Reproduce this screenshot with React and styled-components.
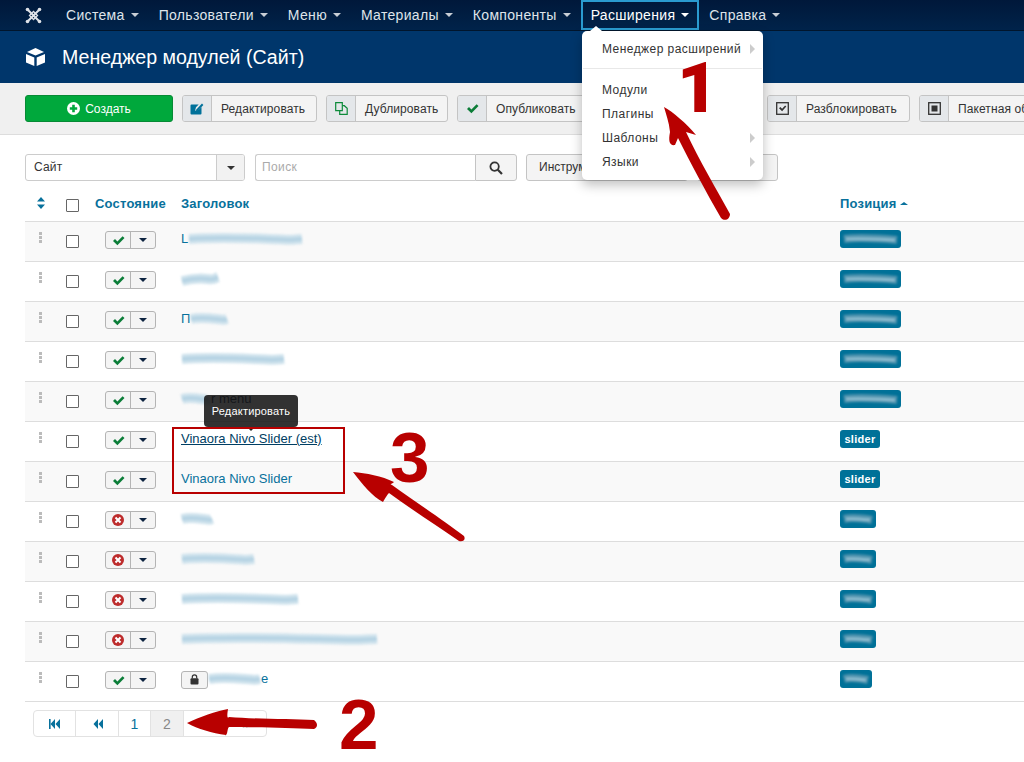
import React from "react";
import styled, { createGlobalStyle } from "styled-components";

const GlobalStyle = createGlobalStyle`
  html, body {
    margin: 0;
    padding: 0;
    height: 762px;
    overflow: hidden;
    background: #fff;
  }
  body {
    font-family: "Liberation Sans", Arial, sans-serif;
    font-size: 13px;
    color: #333;
  }
  * {
    box-sizing: border-box;
  }
`;

const RED = "#b80000";
const BLUE = "#08719c";

const Page = styled.div`
  position: relative;
  width: 1024px;
  height: 762px;
  overflow: hidden;
`;

const NavBar = styled.nav`
  display: flex;
  align-items: stretch;
  height: 31px;
  padding-left: 25px;
  background: linear-gradient(#00183a, #00234a);
  border-bottom: 1px solid #00152c;
`;

const Brand = styled.div`
  width: 31px;
  display: flex;
  align-items: center;
  svg {
    display: block;
  }
`;

const NavItem = styled.div`
  position: relative;
  display: flex;
  align-items: center;
  gap: 6px;
  height: 30px;
  padding: 0 10px;
  font-size: 14px;
  letter-spacing: 0.32px;
  outline: ${(p) => (p.$open ? "2px solid #2a9bd0" : "none")};
  outline-offset: -2px;
  color: ${(p) => (p.$open ? "#fff" : "#dfe4ea")};
`;

const Caret = styled.span`
  display: inline-block;
  width: 0;
  height: 0;
  border-left: 4px solid transparent;
  border-right: 4px solid transparent;
  border-top: ${(p) => (p.$up ? "0" : `4px solid ${p.$color || "#c8ced6"}`)};
  border-bottom: ${(p) => (p.$up ? `3px solid ${p.$color}` : "0")};
  vertical-align: ${(p) => (p.$up ? "3px" : "middle")};
`;

const SubHead = styled.header`
  display: flex;
  align-items: center;
  gap: 16px;
  height: 52px;
  padding-left: 25px;
  background: #00366b;
  color: #fff;
  h1 {
    margin: 0;
    font-size: 19.6px;
    font-weight: 400;
    line-height: 52px;
  }
`;

const ToolBar = styled.div`
  display: flex;
  align-items: center;
  gap: 9px;
  height: 52px;
  padding: 0 0 0 25px;
  background: #f0f0f0;
  border-bottom: 1px solid #ddd;
  white-space: nowrap;
`;

const CreateButton = styled.div`
  display: flex;
  align-items: center;
  justify-content: center;
  gap: 5px;
  flex: none;
  width: 148px;
  height: 27px;
  background: #00a83c;
  border: 1px solid #078a35;
  border-radius: 3px;
  color: #fff;
  font-size: 12px;
`;

const ToolButton = styled.div`
  display: flex;
  align-items: stretch;
  flex: none;
  width: ${(p) => p.$width}px;
  height: 27px;
  background: #f4f4f4;
  border: 1px solid #c4c4c4;
  border-radius: 3px;
  font-size: 12px;
  color: #333;
  overflow: hidden;
`;

const ToolIcon = styled.span`
  display: flex;
  align-items: center;
  justify-content: center;
  flex: none;
  width: 29px;
  background: #e4e7ea;
  border-right: 1px solid #c4c4c4;
`;

const ToolLabel = styled.span`
  display: flex;
  align-items: center;
  padding-left: 9px;
  letter-spacing: 0.1px;
`;

const Filters = styled.div`
  display: flex;
  align-items: center;
  height: 27px;
  margin: 19px 0 0 25px;
  white-space: nowrap;
`;

const SelectBox = styled.div`
  display: flex;
  width: 220px;
  height: 27px;
  border: 1px solid #ccc;
  border-radius: 3px;
  font-size: 12px;
  overflow: hidden;
`;

const SelectValue = styled.span`
  flex: 1;
  padding-left: 8px;
  line-height: 25px;
  letter-spacing: 0.2px;
`;

const SelectArrow = styled.span`
  display: flex;
  align-items: center;
  justify-content: center;
  width: 28px;
  background: #f2f2f2;
  border-left: 1px solid #ccc;
`;

const SearchInput = styled.div`
  width: 220px;
  height: 27px;
  margin-left: 10px;
  padding-left: 6px;
  border: 1px solid #ccc;
  border-right: 0;
  border-radius: 3px 0 0 3px;
  color: #aaa;
  font-size: 12px;
  letter-spacing: 0.4px;
  line-height: 25px;
`;

const SearchButton = styled.div`
  display: flex;
  align-items: center;
  justify-content: center;
  width: 42px;
  height: 27px;
  background: #f4f4f4;
  border: 1px solid #c4c4c4;
  border-radius: 0 3px 3px 0;
`;

const FilterButton = styled.div`
  width: ${(p) => p.$width}px;
  height: 27px;
  margin-left: 9px;
  padding-left: 12px;
  background: #f4f4f4;
  border: 1px solid #c4c4c4;
  border-radius: 3px;
  font-size: 12px;
  line-height: 25px;
`;

const Table = styled.div`
  margin: 9px 0 0 25px;
`;

const columns = "41px 29px 86px 659px 1fr";

const HeadRow = styled.div`
  display: grid;
  grid-template-columns: ${columns};
  align-items: center;
  height: 32px;
  padding-bottom: 5px;
  border-bottom: 1px solid #ddd;
  color: ${BLUE};
  font-size: 13px;
  font-weight: 700;
  letter-spacing: 0.2px;
`;

const Row = styled.div`
  display: grid;
  grid-template-columns: ${columns};
  align-items: start;
  height: 40px;
  padding-top: 9px;
  background: ${(p) => (p.$odd ? "#f9f9f9" : "#fff")};
  border-bottom: 1px solid #ddd;
`;

const SortCell = styled.div`
  display: flex;
  justify-content: center;
  padding-right: 10px;
`;

const Handle = styled.span`
  display: grid;
  grid-template-columns: 3px;
  grid-auto-rows: 3px;
  gap: 1px;
  margin-top: 1px;
  i {
    display: block;
    background: #bbb;
  }
`;

const Check = styled.span`
  display: block;
  width: 13px;
  height: 13px;
  margin-top: ${(p) => (p.$head ? "5px" : "4px")};
  background: #fff;
  border: 1px solid #666;
  border-radius: 1px;
`;

const StatusCell = styled.div`
  padding-left: 10px;
`;

const Toggle = styled.div`
  display: flex;
  width: 51px;
  height: 18px;
  background: #f4f4f4;
  border: 1px solid #b4b4b4;
  border-radius: 3px;
`;

const ToggleIcon = styled.span`
  display: flex;
  align-items: center;
  justify-content: center;
  width: 25px;
  border-right: 1px solid #b4b4b4;
`;

const ToggleCaret = styled.span`
  display: flex;
  align-items: center;
  justify-content: center;
  flex: 1;
`;

const TitleCell = styled.div`
  display: flex;
  align-items: center;
  height: 15px;
  font-size: 13px;
  color: ${BLUE};
  white-space: nowrap;
`;

const TitleLink = styled.span`
  color: ${(p) => (p.$hover ? "#003e63" : BLUE)};
  text-decoration: ${(p) => (p.$hover ? "underline" : "none")};
`;

const DarkText = styled.span`
  color: #0c2340;
  margin-left: 1px;
`;

const LockButton = styled.span`
  display: flex;
  flex: none;
  align-items: center;
  justify-content: center;
  width: 27px;
  height: 18px;
  margin-top: 2px;
  background: #f4f4f4;
  border: 1px solid #b4b4b4;
  border-radius: 3px;
`;

const Smudge = styled.svg`
  display: block;
  flex: none;
  overflow: visible;
  filter: blur(${(p) => p.$blur}px);
`;

const Badge = styled.span`
  display: inline-flex;
  align-items: center;
  justify-content: center;
  height: 18px;
  min-width: ${(p) => p.$width}px;
  margin-top: -1px;
  padding: 0 4px;
  background: #007198;
  border-radius: 3px;
  color: #fff;
  font-size: 11px;
  font-weight: 700;
  letter-spacing: 0.3px;
`;

const Pagination = styled.div`
  display: flex;
  width: 234px;
  height: 27px;
  margin: 8px 0 0 33px;
  border: 1px solid #e2e2e2;
  border-radius: 4px;
  background: #fff;
`;

const PageCell = styled.span`
  display: flex;
  align-items: center;
  justify-content: center;
  width: ${(p) => p.$width}px;
  border-right: ${(p) => (p.$last ? "0" : "1px solid #e2e2e2")};
  background: ${(p) => (p.$active ? "#f0f0f0" : "transparent")};
  color: ${(p) => (p.$active ? "#888" : p.$muted ? "#ccc" : BLUE)};
  font-size: 14px;
`;

const Dropdown = styled.div`
  position: absolute;
  left: 582px;
  top: 31px;
  width: 181px;
  height: 149px;
  padding-top: 6px;
  background: #fff;
  border-radius: 5px;
  box-shadow: 0 5px 12px rgba(0, 0, 0, 0.25);
  font-size: 12px;
  color: #333;
  &::before {
    content: "";
    position: absolute;
    left: 8px;
    top: -5px;
    border-left: 6px solid transparent;
    border-right: 6px solid transparent;
    border-bottom: 5px solid #fff;
  }
`;

const MenuItem = styled.div`
  display: flex;
  align-items: center;
  justify-content: space-between;
  height: 24px;
  padding: 0 10px 0 20px;
  letter-spacing: 0.45px;
`;

const MenuArrow = styled.span`
  width: 0;
  height: 0;
  border-top: 5px solid transparent;
  border-bottom: 5px solid transparent;
  border-left: 5px solid #ccc;
  margin-right: -2px;
`;

const MenuDivider = styled.div`
  height: 1px;
  margin: 7px 1px 9px;
  background: #e8e8e8;
`;

const Tooltip = styled.div`
  position: absolute;
  left: 204px;
  top: 395px;
  width: 94px;
  height: 32px;
  padding-top: 10px;
  background: rgba(22, 22, 22, 0.88);
  border-radius: 4px;
  color: #fff;
  font-size: 11px;
  letter-spacing: 0.2px;
  text-align: center;
  &::after {
    content: "";
    position: absolute;
    left: 43px;
    bottom: -4px;
    border-left: 4px solid transparent;
    border-right: 4px solid transparent;
    border-top: 4px solid #222;
  }
`;

const Scrawl = styled.svg`
  position: absolute;
  left: 0;
  top: 0;
  pointer-events: none;
`;

const Numeral = styled.span`
  position: absolute;
  left: ${(p) => p.$x}px;
  top: ${(p) => p.$y}px;
  color: ${RED};
  font-family: ${(p) => (p.$plain ? `Roboto, sans-serif` : "inherit")};
  font-size: 71px;
  font-weight: ${(p) => (p.$plain ? 900 : 700)};
  line-height: 71px;
`;

const MarkBox = styled.div`
  position: absolute;
  left: 172px;
  top: 427px;
  width: 173px;
  height: 67px;
  border: 2px solid ${RED};
`;

const JoomlaLogo = () => (
  <svg width="17" height="17" viewBox="0 0 17 17" fill="none" stroke="#dfe3e8" strokeLinecap="round">
    <path d="M3 3l11 11M14 3L3 14" strokeWidth="2" />
    <path d="M4.5 8.5L8.5 4.5 12.5 8.5 8.5 12.5z" strokeWidth="1.3" />
    <circle cx="2.5" cy="2.5" r="1.8" fill="#dfe3e8" stroke="none" />
    <circle cx="14.5" cy="2.5" r="1.8" fill="#dfe3e8" stroke="none" />
    <circle cx="2.5" cy="14.5" r="1.8" fill="#dfe3e8" stroke="none" />
    <circle cx="14.5" cy="14.5" r="1.8" fill="#dfe3e8" stroke="none" />
  </svg>
);

const CubeIcon = () => (
  <svg width="21" height="20" viewBox="0 0 21 20" fill="#fff">
    <path d="M10.5 1L19 5l-8.5 3.6L2 5z" />
    <path d="M1 7l8.3 3.4V19L1 15.4z" />
    <path d="M20 7l-8.3 3.4V19l8.3-3.6z" />
  </svg>
);

const PlusCircle = () => (
  <svg width="13" height="13" viewBox="0 0 13 13">
    <circle cx="6.5" cy="6.5" r="6.5" fill="#fff" />
    <path d="M5.2 2.8h2.6v2.4h2.4v2.6H7.8v2.4H5.2V7.8H2.8V5.2h2.4z" fill="#00a83c" />
  </svg>
);

const EditIcon = () => (
  <svg width="14" height="14" viewBox="0 0 14 14" fill="#00719a">
    <path d="M1.5 2.5h7.2L6 5.2 5 8.8 8.6 7.8 11.5 5v6.5a1 1 0 0 1-1 1h-9a1 1 0 0 1-1-1v-8a1 1 0 0 1 1-1z" />
    <path d="M6.6 7.2l5.4-5.6 1.4 1.4-5.4 5.6-2 .6z" />
  </svg>
);

const CopyIcon = () => (
  <svg width="13" height="13" viewBox="0 0 13 13" fill="none" stroke="#0c8a3a" strokeWidth="1.2">
    <path d="M.7.7h6.6v8H.7z" />
    <path d="M7.3 3.7h2l2.9 2.6v6H4.7V8.7" />
  </svg>
);

const CheckMark = () => (
  <svg width="13" height="13" viewBox="0 0 13 13">
    <path d="M1 7l2-2 2.4 2.4L10.6 2.2 12.5 4 5.4 11.2z" fill="#0b7d38" />
  </svg>
);

const CheckSquare = () => (
  <svg width="13" height="13" viewBox="0 0 13 13" fill="none">
    <rect x=".7" y=".7" width="11.6" height="11.6" stroke="#333" strokeWidth="1.3" />
    <path d="M3 6.2l1.3-1.2 1.8 1.8 3-3.3 1.2 1.1-4.2 4.6z" fill="#333" />
  </svg>
);

const BatchIcon = () => (
  <svg width="13" height="13" viewBox="0 0 13 13" fill="none">
    <rect x=".7" y=".7" width="11.6" height="11.6" stroke="#333" strokeWidth="1.3" />
    <rect x="3.5" y="3.5" width="6" height="6" fill="#333" />
  </svg>
);

const CrossCircle = () => (
  <svg width="12" height="12" viewBox="0 0 12 12">
    <circle cx="6" cy="6" r="6" fill="#bd2c2c" />
    <path d="M3.5 3.5l5 5M8.5 3.5l-5 5" stroke="#fff" strokeWidth="2" />
  </svg>
);

const LockIcon = () => (
  <svg width="9" height="11" viewBox="0 0 9 11">
    <path d="M2.3 4.5V3a2.2 2.2 0 0 1 4.4 0v1.5" fill="none" stroke="#333" strokeWidth="1.2" />
    <rect x=".5" y="4.2" width="8" height="6.3" rx="1" fill="#333" />
  </svg>
);

const SearchIcon = () => (
  <svg width="14" height="14" viewBox="0 0 14 14" fill="none" stroke="#333">
    <circle cx="5.6" cy="5.6" r="4.2" strokeWidth="1.8" />
    <path d="M8.8 8.8L13 13" strokeWidth="2.2" />
  </svg>
);

const SortIcon = () => (
  <svg width="10" height="12" viewBox="0 0 10 12" fill={BLUE}>
    <path d="M5 0l4 4.5H1zM1 7.5h8L5 12z" />
  </svg>
);

const SkipIcon = ({ first }) => (
  <svg width="11" height="10" viewBox="0 0 11 10" fill={BLUE}>
    {first && <rect x="0" y="0" width="1.6" height="10" />}
    <path d="M6 0v10L1.5 5zM11 0v10L6.5 5z" />
  </svg>
);

// painted-over titles: a pale brush band with a darker streak through it
const TitleSmudge = ({ width, tilt = 0 }) => {
  const band = `M1 ${6 + tilt} C${width * 0.25} ${4 + tilt} ${width * 0.5} 5 ${width * 0.7} 6 S${width * 0.9} ${7 - tilt} ${width - 1} ${6 - tilt}`;
  return (
    <Smudge $blur={1} width={width} height="12" viewBox={`0 0 ${width} 12`} fill="none">
      <path d={band} stroke="#d0e3ed" strokeWidth="10" />
      <path d={band} stroke="#b7d4e4" strokeWidth="4" />
    </Smudge>
  );
};

const BadgeSmudge = ({ width }) => (
  <Smudge $blur={0.8} width={width} height="10" viewBox={`0 0 ${width} 10`} fill="none">
    <path d={`M0 5 C${width * 0.3} 3 ${width * 0.6} 4 ${width} 6`} stroke="#4f93ae" strokeWidth="8" />
    <path d={`M2 5 C${width * 0.3} 4 ${width * 0.6} 5 ${width - 2} 6`} stroke="#8dbccf" strokeWidth="3" />
  </Smudge>
);

const rows = [
  { on: true, lead: "L", smudge: 115, badge: 61 },
  { on: true, smudge: 38, tilt: 2, badge: 61 },
  { on: true, lead: "П", smudge: 38, badge: 61 },
  { on: true, smudge: 104, badge: 61 },
  { on: true, smudge: 29, tail: "r menu", badge: 61 },
  { on: true, title: "Vinaora Nivo Slider (est)", hover: true, label: "slider", badge: 40 },
  { on: true, title: "Vinaora Nivo Slider", label: "slider", badge: 40 },
  { on: false, smudge: 32, badge: 36 },
  { on: false, smudge: 74, badge: 36 },
  { on: false, smudge: 118, badge: 36 },
  { on: false, smudge: 197, badge: 36 },
  { on: true, lock: true, smudge: 53, tail2: "e", badge: 32 },
];

const topItems = ["Система", "Пользователи", "Меню", "Материалы", "Компоненты"];

function App() {
  return (
    <Page>
      <GlobalStyle />
      <NavBar>
        <Brand>
          <JoomlaLogo />
        </Brand>
        {topItems.map((item) => (
          <NavItem key={item}>
            {item}
            <Caret />
          </NavItem>
        ))}
        <NavItem $open>
          Расширения
          <Caret $color="#fff" />
        </NavItem>
        <NavItem>
          Справка
          <Caret />
        </NavItem>
      </NavBar>
      <SubHead>
        <CubeIcon />
        <h1>Менеджер модулей (Сайт)</h1>
      </SubHead>
      <ToolBar>
        <CreateButton>
          <PlusCircle />
          Создать
        </CreateButton>
        <ToolButton $width={135}>
          <ToolIcon>
            <EditIcon />
          </ToolIcon>
          <ToolLabel>Редактировать</ToolLabel>
        </ToolButton>
        <ToolButton $width={122}>
          <ToolIcon>
            <CopyIcon />
          </ToolIcon>
          <ToolLabel>Дублировать</ToolLabel>
        </ToolButton>
        <ToolButton $width={131}>
          <ToolIcon>
            <CheckMark />
          </ToolIcon>
          <ToolLabel>Опубликовать</ToolLabel>
        </ToolButton>
        <ToolButton $width={161}>
          <ToolIcon />
          <ToolLabel>Снять с публикации</ToolLabel>
        </ToolButton>
        <ToolButton $width={143}>
          <ToolIcon>
            <CheckSquare />
          </ToolIcon>
          <ToolLabel>Разблокировать</ToolLabel>
        </ToolButton>
        <ToolButton $width={140}>
          <ToolIcon>
            <BatchIcon />
          </ToolIcon>
          <ToolLabel>Пакетная обработка</ToolLabel>
        </ToolButton>
      </ToolBar>
      <Filters>
        <SelectBox>
          <SelectValue>Сайт</SelectValue>
          <SelectArrow>
            <Caret $color="#333" />
          </SelectArrow>
        </SelectBox>
        <SearchInput>Поиск</SearchInput>
        <SearchButton>
          <SearchIcon />
        </SearchButton>
        <FilterButton $width={162}>Инструменты поиска</FilterButton>
        <FilterButton $width={81}>Очистить</FilterButton>
      </Filters>
      <Table>
        <HeadRow>
          <SortCell>
            <SortIcon />
          </SortCell>
          <div>
            <Check $head />
          </div>
          <span>Состояние</span>
          <span>Заголовок</span>
          <span>
            Позиция <Caret $up $color={BLUE} />
          </span>
        </HeadRow>
        {rows.map((row, i) => (
          <Row key={i} $odd={i % 2 === 0}>
            <SortCell>
              <Handle>
                <i />
                <i />
                <i />
              </Handle>
            </SortCell>
            <div>
              <Check />
            </div>
            <StatusCell>
              <Toggle>
                <ToggleIcon>{row.on ? <CheckMark /> : <CrossCircle />}</ToggleIcon>
                <ToggleCaret>
                  <Caret $color="#0c2340" />
                </ToggleCaret>
              </Toggle>
            </StatusCell>
            <TitleCell>
              {row.lock && (
                <LockButton>
                  <LockIcon />
                </LockButton>
              )}
              {row.lead}
              {row.title && <TitleLink $hover={row.hover}>{row.title}</TitleLink>}
              {row.smudge && <TitleSmudge width={row.smudge} tilt={row.tilt} />}
              {row.tail && <DarkText>{row.tail}</DarkText>}
              {row.tail2}
            </TitleCell>
            <div>
              <Badge $width={row.badge}>
                {row.label || <BadgeSmudge width={row.badge - 8} />}
              </Badge>
            </div>
          </Row>
        ))}
      </Table>
      <Pagination>
        <PageCell $width={42}>
          <SkipIcon first />
        </PageCell>
        <PageCell $width={43}>
          <SkipIcon />
        </PageCell>
        <PageCell $width={32}>1</PageCell>
        <PageCell $width={33} $active>
          2
        </PageCell>
        <PageCell $width={42} $muted />
        <PageCell $width={40} $muted $last>
          »
        </PageCell>
      </Pagination>

      <Dropdown>
        <MenuItem>
          Менеджер расширений
          <MenuArrow />
        </MenuItem>
        <MenuDivider />
        <MenuItem>Модули</MenuItem>
        <MenuItem>Плагины</MenuItem>
        <MenuItem>
          Шаблоны
          <MenuArrow />
        </MenuItem>
        <MenuItem>
          Языки
          <MenuArrow />
        </MenuItem>
      </Dropdown>

      <Tooltip>Редактировать</Tooltip>
      <MarkBox />

      <Scrawl width="1024" height="762" viewBox="0 0 1024 762" fill={RED}>
        <path d="M664 107C672 111 687 124 696 135L686 132C699 160 717 190 730 214C730 219 725 222 721 218C706 192 690 162 678 138L675 145C670 146 668 142 670 132C669 122 666 114 664 107Z" />
        <path d="M187 723C200 717 216 711 228 709C227 715 227 719 229 717C255 719 290 719 314 720C318 723 318 727 314 729C290 728 255 727 229 727C227 729 228 733 226 735C212 733 198 729 187 723Z" />
        <path d="M353 472C366 473 382 476 394 482C392 484 389 484 392 485C416 502 444 521 464 536C466 540 463 542 459 541C437 526 411 509 389 493C387 495 386 497 383 502C373 497 362 484 353 472Z" />
      </Scrawl>
      <Numeral $plain $x={677} $y={52}>
        1
      </Numeral>
      <Numeral $x={339} $y={689}>
        2
      </Numeral>
      <Numeral $x={390} $y={422}>
        3
      </Numeral>
    </Page>
  );
}

export default App;
